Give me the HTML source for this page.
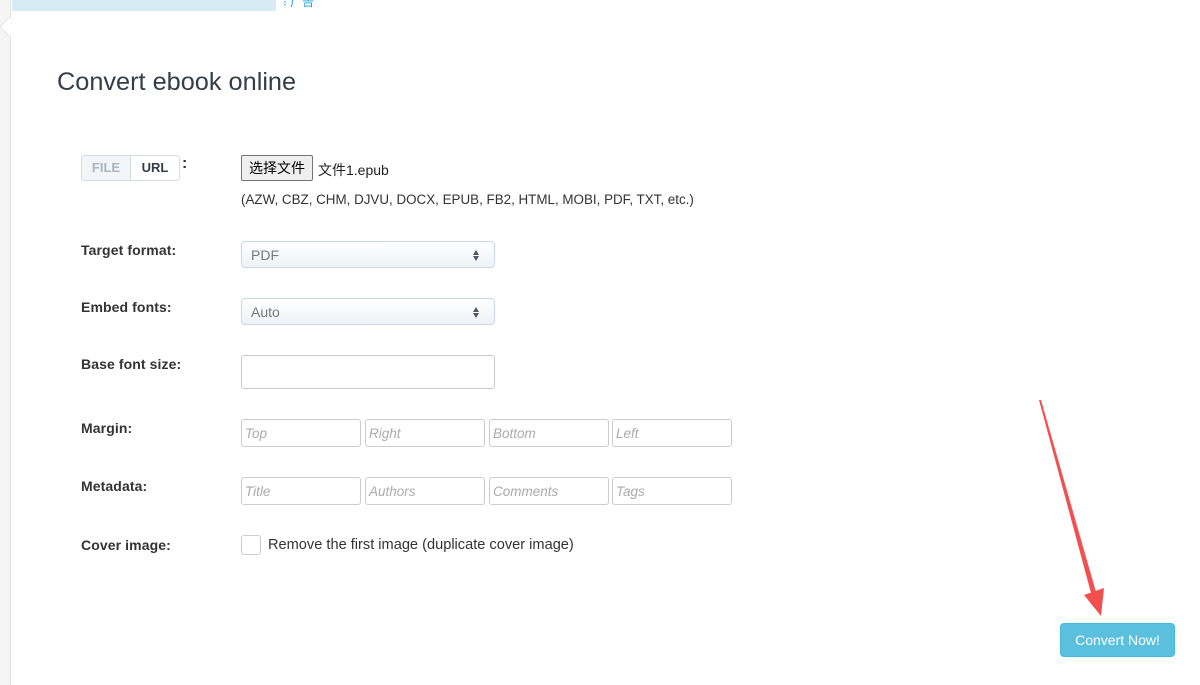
<!DOCTYPE html>
<html><head><meta charset="utf-8"><style>
*{box-sizing:border-box;margin:0;padding:0}
body{width:1200px;height:685px;overflow:hidden;background:#fff;font-family:"Liberation Sans","Noto Sans CJK SC",sans-serif;color:#333;position:relative}
.a{position:absolute}
.lbl{position:absolute;left:81px;font-size:14px;color:#333;font-weight:bold;letter-spacing:0.1px}
.sel{position:absolute;left:241px;width:254px;height:27px;border:1px solid #c8d8e6;border-radius:4px;background:linear-gradient(#fff,#eef2f6);font-size:14px;color:#777;padding:5px 9px}
.sel:after{content:"";position:absolute;right:15px;top:5px;border:3.5px solid transparent;border-bottom:5px solid #556;}
.sel:before{content:"";position:absolute;right:15px;top:14px;border:3.5px solid transparent;border-top:5px solid #556;}
.in{position:absolute;width:120px;height:28px;border:1px solid #ccc;border-radius:3px;font-size:13.5px;font-style:italic;color:#aaa;padding:6px 3px}
</style></head><body>
<div class="a" style="left:0;top:0;width:11px;height:685px;background:#f5f5f5;border-right:1px solid #e3e3e3"></div>
<div class="a" style="left:2px;top:20px;width:14px;height:14px;background:#fff;border-left:1px solid #e3e3e3;border-bottom:1px solid #e3e3e3;transform:rotate(45deg)"></div>
<div class="a" style="left:12px;top:0;width:264px;height:11px;background:#d6ebf4"></div>
<div class="a" style="left:283px;top:-7px;font-size:12px;color:#1aa3d6">⁝ 广告</div>
<div class="a" style="left:57px;top:68px;font-size:25.3px;color:#333e48">Convert ebook online</div>
<div class="a" style="left:81px;top:155px;width:99px;height:26px;border:1px solid #d5dde5;border-radius:3px;font-size:13px;font-weight:bold;display:flex">
<div style="width:49px;background:#f3f6f9;color:#aab4c0;text-align:center;line-height:24px;border-right:1px solid #d5dde5">FILE</div>
<div style="flex:1;color:#333e48;text-align:center;line-height:24px">URL</div></div>
<div class="a" style="left:182px;top:155px;font-size:16px;font-weight:bold">:</div>
<div class="a" style="left:241px;top:155px;width:72px;height:26px;border:1px solid #767676;border-radius:2px;background:#efefef;font-size:14px;text-align:center;line-height:24px;color:#000">选择文件</div>
<div class="a" style="left:318px;top:160px;font-size:14px;color:#222">文件1.epub</div>
<div class="a" style="left:241px;top:192px;font-size:13.4px;color:#333">(AZW, CBZ, CHM, DJVU, DOCX, EPUB, FB2, HTML, MOBI, PDF, TXT, etc.)</div>
<div class="lbl" style="top:242px">Target format:</div>
<div class="sel" style="top:241px">PDF</div>
<div class="lbl" style="top:299px">Embed fonts:</div>
<div class="sel" style="top:298px">Auto</div>
<div class="lbl" style="top:356px">Base font size:</div>
<div class="a" style="left:241px;top:355px;width:254px;height:34px;border:1px solid #ccc;border-radius:3px"></div>
<div class="lbl" style="top:420px">Margin:</div>
<div class="in" style="left:241px;top:419px">Top</div>
<div class="in" style="left:365px;top:419px">Right</div>
<div class="in" style="left:489px;top:419px">Bottom</div>
<div class="in" style="left:612px;top:419px">Left</div>
<div class="lbl" style="top:478px">Metadata:</div>
<div class="in" style="left:241px;top:477px">Title</div>
<div class="in" style="left:365px;top:477px">Authors</div>
<div class="in" style="left:489px;top:477px">Comments</div>
<div class="in" style="left:612px;top:477px">Tags</div>
<div class="lbl" style="top:537px">Cover image:</div>
<div class="a" style="left:241px;top:535px;width:20px;height:20px;border:1px solid #ccc;border-radius:3px"></div>
<div class="a" style="left:268px;top:537px;font-size:14.6px;color:#333">Remove the first image (duplicate cover image)</div>
<svg class="a" style="left:0;top:0" width="1200" height="685"><polygon points="1039,400 1041,400 1096,592 1091,593" fill="#f44f4f"/><polygon points="1084,595 1104,588 1101,616" fill="#f44f4f"/></svg>
<div class="a" style="left:1060px;top:623px;width:115px;height:34px;background:#5bc0de;border:1px solid #46b8da;border-radius:4px;color:#fff;font-size:14px;text-align:center;line-height:32px">Convert Now!</div>
</body></html>
